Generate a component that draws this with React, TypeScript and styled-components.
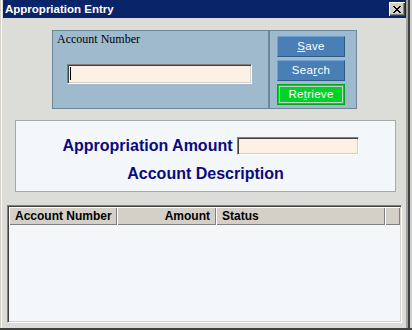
import styled, { createGlobalStyle } from 'styled-components';

const GlobalStyle = createGlobalStyle`
  html, body {
    margin: 0;
    padding: 0;
    background: #dcddd9;
  }
  * { box-sizing: border-box; }
`

const Window = styled.div`
  width: 412px;
  height: 330px;
  background: #dcddd9;
  padding: 0 6px 0 3px;
  border-bottom: 2px solid #404040;
  box-shadow: inset 1px 0 #d4d0c8, inset 2px 0 #fbfaf2,
    inset -2px 0 #cfcfcb, inset -4px 0 #404040, inset -6px 0 #a0a0a0;
  display: flex;
  flex-direction: column;
  font-family: "Liberation Sans", Arial, sans-serif;
`
const TitleBar = styled.div`
  height: 18px;
  background: #0a246a;
  color: #fff;
  font-weight: bold;
  font-size: 11.5px;
  padding-left: 2px;
  display: flex;
  align-items: center;
  justify-content: space-between;
`
const CloseButton = styled.div`
  width: 16px;
  height: 14px;
  margin-right: 1px;
  background: #d4d0c8;
  box-shadow: inset 1px 1px #fff, inset -1px -1px #404040, inset -2px -2px #808080;
  display: flex;
  align-items: center;
  justify-content: center;
`
const Content = styled.div`
  flex: 1;
  display: flex;
  flex-direction: column;
  padding-top: 12px;
`
const TopPanel = styled.div`
  align-self: center;
  display: flex;
`
const AccountBox = styled.div`
  width: 217px;
  height: 79px;
  border: 1px solid #6e8797;
  background: #9fbacd;
  padding: 1px 0 0 4px;
  label {
    display: block;
    font-family: "Liberation Serif", "Times New Roman", serif;
    font-size: 12px;
    line-height: 14px;
    color: #000;
  }
`
const CaretWrap = styled.div`
  position: relative;
  margin: 18px 0 0 10px;
  width: 185px;
  &::after {
    content: '';
    position: absolute;
    left: 3px;
    top: 3px;
    width: 1px;
    height: 13px;
    background: #000;
  }
`
const TextBox = styled.input<{ $w: number; $h: number }>`
  display: block;
  width: ${p => p.$w}px;
  height: ${p => p.$h}px;
  background: #fcf1e4;
  border: 1px solid;
  border-color: #808080 #fff #fff #808080;
  box-shadow: inset 1px 1px #404040, inset -1px -1px #d4d0c8;
  padding: 0 4px;
  outline: none;
  font-size: 12px;
`
const ButtonBox = styled.div`
  width: 88px;
  height: 79px;
  border: 1px solid #6e8797;
  background: #9fbacd;
  padding: 5px 0 0 7px;
  display: flex;
  flex-direction: column;
  gap: 3px;
`
const Button = styled.button<{ $focus?: boolean }>`
  width: 68px;
  height: 21px;
  padding: 0;
  border: 1px solid;
  border-color: ${p => p.$focus ? '#00a81e' : '#6d9fd3 #2e5a86 #2e5a86 #6d9fd3'};
  background: ${p => p.$focus ? '#00d22a' : '#4a7fb5'};
  outline: ${p => p.$focus ? '1px solid #c8d0c8' : 'none'};
  outline-offset: -3px;
  color: #fff;
  font-family: "Liberation Sans", Arial, sans-serif;
  font-size: 11.5px;
  line-height: 19px;
  letter-spacing: 0.3px;
  cursor: pointer;
`
const MidPanel = styled.div`
  margin: 11px 0 0 12px;
  width: 381px;
  height: 72px;
  background: #f3f7fa;
  border: 1px solid #a8a8a8;
  padding-top: 16px;
  display: flex;
  flex-direction: column;
  align-items: center;
`
const AmountRow = styled.div`
  display: flex;
  align-items: center;
  gap: 4px;
  padding-left: 10px;
`
const NavyLabel = styled.div<{ $top?: number }>`
  color: #0a0a80;
  font-weight: bold;
  font-size: 16px;
  line-height: 18px;
  margin-top: ${p => p.$top ?? 0}px;
`
const Table = styled.div`
  margin: 13px 0 0 4px;
  width: 395px;
  height: 118px;
  border: 1px solid;
  border-color: #808080 #fff #fff #808080;
  box-shadow: inset 1px 1px #404040, inset -1px -1px #d4d0c8;
  background: #f3f7fa;
  padding: 1px;
`
const HeaderRow = styled.div`
  display: grid;
  grid-template-columns: 108px 99px 169px 1fr;
  height: 18px;
`
const HeaderCell = styled.div<{ $right?: boolean }>`
  background: #d4d0c8;
  box-shadow: inset 1px 1px #fff, inset -1px -1px #808080;
  font-weight: bold;
  font-size: 12px;
  line-height: 18px;
  color: #000;
  padding: 0 6px;
  text-align: ${p => p.$right ? 'right' : 'left'};
  white-space: nowrap;
`

const App = () => {
  return (
    <>
      <GlobalStyle />
      <Window>
        <TitleBar>
          <span>Appropriation Entry</span>
          <CloseButton>
            <svg width="8" height="7" viewBox="0 0 8 7">
              <path d="M0 0 L7 7 M1 0 L8 7 M7 0 L0 7 M8 0 L1 7" stroke="#000" strokeWidth="1" />
            </svg>
          </CloseButton>
        </TitleBar>
        <Content>
          <TopPanel>
            <AccountBox>
              <label>Account Number</label>
              <CaretWrap>
                <TextBox $w={185} $h={20} />
              </CaretWrap>
            </AccountBox>
            <ButtonBox>
              <Button><u>S</u>ave</Button>
              <Button>Sea<u>r</u>ch</Button>
              <Button $focus>Re<u>t</u>rieve</Button>
            </ButtonBox>
          </TopPanel>
          <MidPanel>
            <AmountRow>
              <NavyLabel>Appropriation Amount</NavyLabel>
              <TextBox $w={122} $h={18} />
            </AmountRow>
            <NavyLabel $top={10}>Account Description</NavyLabel>
          </MidPanel>
          <Table>
            <HeaderRow>
              <HeaderCell>Account Number</HeaderCell>
              <HeaderCell $right>Amount</HeaderCell>
              <HeaderCell>Status</HeaderCell>
              <HeaderCell />
            </HeaderRow>
          </Table>
        </Content>
      </Window>
    </>
  )
}
export default App;
